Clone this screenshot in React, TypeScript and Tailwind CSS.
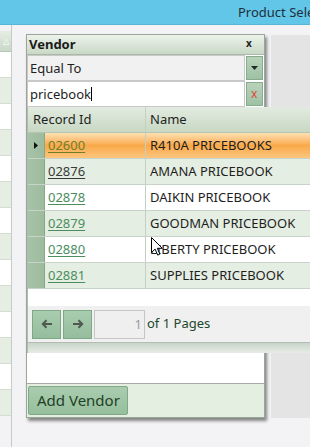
import React from 'react';

type Row = { id: string; name: string; tone: 'sel' | 'green' | 'white'; link: string };

const ROWS: Row[] = [
  { id: '02600', name: 'R410A PRICEBOOKS', tone: 'sel', link: 'text-[#6f7d28] decoration-[#6f7d28]' },
  { id: '02876', name: 'AMANA PRICEBOOK', tone: 'green', link: 'text-[#3a3a3a] decoration-[#3a3a3a]' },
  { id: '02878', name: 'DAIKIN PRICEBOOK', tone: 'white', link: 'text-[#4b8d5f] decoration-[#4b8d5f]' },
  { id: '02879', name: 'GOODMAN PRICEBOOK', tone: 'green', link: 'text-[#4b8d5f] decoration-[#4b8d5f]' },
  { id: '02880', name: 'LIBERTY PRICEBOOK', tone: 'white', link: 'text-[#4b8d5f] decoration-[#4b8d5f]' },
  { id: '02881', name: 'SUPPLIES PRICEBOOK', tone: 'green', link: 'text-[#4b8d5f] decoration-[#4b8d5f]' },
];

// left list behind the popup
const LEFT_ROWS = Array.from({ length: 14 }, (_, i) => i);

const App: React.FC = () => {
  return (
    <div className="relative w-[310px] h-[447px] overflow-hidden bg-[#f3f3f5] text-[#1e1e1e] font-['Noto_Sans','Open_Sans',sans-serif]">
      {/* title bar */}
      <div className="h-[25px] bg-[#62c6e9] border-b border-[#55b6d8] pl-[238px] pt-[4px] text-[13px] leading-[17px] whitespace-nowrap text-[#1f2f3a]">
        Product Selection
      </div>

      <div className="flex h-[422px]">
        {/* left grid strip */}
        <div className="w-[12px] shrink-0 pt-[6px] border-r border-[#c3cec3]">
          <div className="h-[21px] bg-gradient-to-b from-[#e6ede4] to-[#cad8c7] border-b border-[#b7c6b5] text-[8px] text-white leading-[20px] pl-[3px]">
            △
          </div>
          {LEFT_ROWS.map((i) => (
            <div
              key={i}
              className={`h-[26px] border-b border-[#d4dcd3] ${i % 2 === 0 ? 'bg-white' : 'bg-[#e6eee3]'}`}
            />
          ))}
        </div>

        {/* vendor panel */}
        <div className="ml-[14px] mt-[9px] w-[243px] h-[384px] flex flex-col border border-[#9aa69a] bg-white shadow-[2px_3px_3px_rgba(0,0,0,0.45)]">
          <div className="h-[20px] flex items-center justify-between px-[2px] bg-gradient-to-b from-[#edf2eb] to-[#c9d9c6] border-b border-[#aab8a8]">
            <span className="font-bold text-[13px] leading-none text-[#1a1a1a]">Vendor</span>
            <span className="font-bold text-[10px] leading-none mr-[10px] mb-[4px]">x</span>
          </div>
          <div className="h-[26px] flex">
            <div className="flex-1 bg-[#f1f1f1] border border-[#c8c8c8] text-[13px] leading-[24px] pl-[2px]">Equal To</div>
            <div className="w-[17px] mx-px my-[1px] bg-gradient-to-b from-[#b9d3bb] to-[#9ec1a3] border border-[#86ac8c] flex items-center justify-center">
              <svg width="7" height="4" viewBox="0 0 7 4"><path d="M0 0h7L3.5 4z" fill="#1e2e22" /></svg>
            </div>
          </div>
          <div className="h-[26px] flex">
            <div className="flex-1 bg-white border border-[#c8c8c8] text-[13px] leading-[24px] pl-[2px]">
              pricebook<span className="inline-block w-px h-[14px] bg-black align-[-2px]" />
            </div>
            <div className="w-[17px] mx-px my-[1px] bg-gradient-to-b from-[#b9d3bb] to-[#9ec1a3] border border-[#86ac8c] flex items-center justify-center text-[#e0453c] text-[12px] leading-none">
              x
            </div>
          </div>
          <div className="flex-1" />
          <div className="h-[34px] bg-[#e4eee1] border-t border-[#a9a9a9] px-[1px] pt-[2px]">
            <div className="w-[100px] h-[29px] bg-gradient-to-b from-[#a9ccae] to-[#96bf9d] border border-[#7ea886] rounded-[2px] text-[15px] leading-[27px] pl-[8px] text-[#1f3f27]">
              Add Vendor
            </div>
          </div>
        </div>

        {/* right gray panel */}
        <div className="ml-[6px] mt-[10px] w-[40px] h-[383px] bg-[#e4e4e4]" />
      </div>

      {/* search results dropdown grid */}
      <div className="absolute left-[27px] top-[107px] w-[300px] h-[246px] flex flex-col bg-white border-l border-[#b0bcb0]">
        <div className="h-[26px] flex bg-gradient-to-b from-[#e2ebdf] to-[#c8d8c4] border-b border-[#b6c4b4] text-[13px] leading-[25px]">
          <div className="w-[118px] pl-[5px] border-r border-[#c4d0c2]">Record Id</div>
          <div className="pl-[4px]">Name</div>
        </div>
        {ROWS.map((r) => {
          const bg =
            r.tone === 'sel'
              ? 'bg-gradient-to-b from-[#fde1b2] via-[#f9a948] to-[#fcc57e]'
              : r.tone === 'green'
              ? 'bg-[#e5eee2]'
              : 'bg-white';
          return (
            <div key={r.id} className="h-[26px] flex border-b border-[#c9d2c8] text-[13px] leading-[25px]">
              <div className="w-[17px] bg-gradient-to-r from-[#a7c3a7] to-[#9dbb9e] border-r border-[#86a887] flex items-center justify-center">
                {r.tone === 'sel' && (
                  <svg width="4" height="7" viewBox="0 0 4 7"><path d="M0 0l4 3.5L0 7z" fill="#111" /></svg>
                )}
              </div>
              <div className={`flex-1 flex ${bg}`}>
                <div className="w-[101px] pl-[3px] border-r border-[#c4cfc3]">
                  <span className={`underline underline-offset-2 ${r.link}`}>{r.id}</span>
                </div>
                <div className="pl-[4px] whitespace-nowrap text-[#1e1e1e]">{r.name}</div>
              </div>
            </div>
          );
        })}
        <div className="flex-1" />
        <div className="h-[37px] bg-[#f0f0f0] border-b border-[#b4bcb4] flex items-center gap-[2px] pl-[4px]">
          <div className="w-[29px] h-[29px] bg-gradient-to-b from-[#a9ccaf] to-[#95bd9d] border border-[#7ea886] flex items-center justify-center">
            <svg width="12" height="10" viewBox="0 0 12 10"><path d="M11 5H2M5.5 1.2L1.8 5l3.7 3.8" stroke="#4e5a50" strokeWidth="2" fill="none" /></svg>
          </div>
          <div className="w-[29px] h-[29px] bg-gradient-to-b from-[#a9ccaf] to-[#95bd9d] border border-[#7ea886] flex items-center justify-center">
            <svg width="12" height="10" viewBox="0 0 12 10"><path d="M1 5h9M6.5 1.2L10.2 5 6.5 8.8" stroke="#4e5a50" strokeWidth="2" fill="none" /></svg>
          </div>
          <div className="w-[51px] h-[29px] bg-[#efefef] border border-[#c6c6c6] text-right pr-[2px] text-[13px] leading-[27px] text-[#9a9a9a]">1</div>
          <span className="text-[13px] text-[#22472c]">of 1 Pages</span>
        </div>
        <div className="h-[10px] bg-gradient-to-b from-[#c9d5c8] to-[#e6ece5]" />
      </div>

      {/* mouse pointer */}
      <svg className="absolute left-[151px] top-[237px]" width="12" height="19" viewBox="0 0 12 19">
        <path d="M0.5 0.5v15l3.6-3.4 2.6 6 2.2-1-2.6-5.8h5z" fill="#fff" stroke="#000" strokeWidth="1" />
      </svg>
    </div>
  );
};

export default App;
